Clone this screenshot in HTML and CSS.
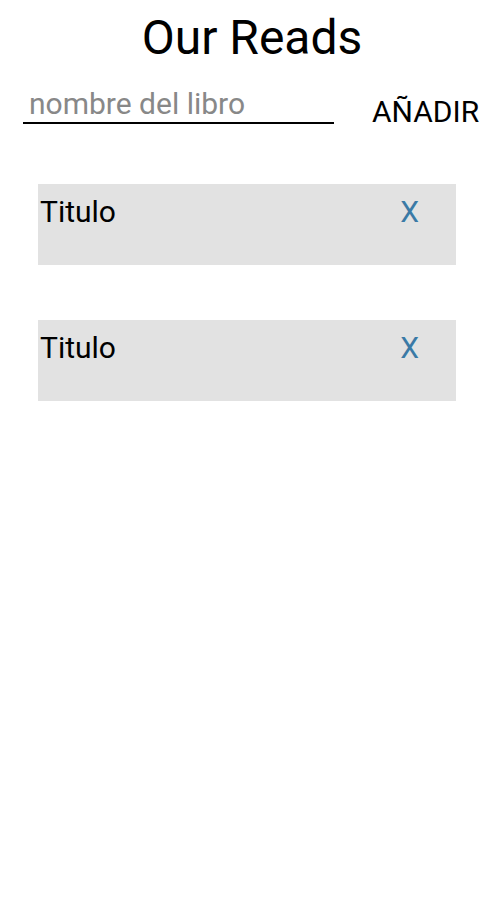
FILE: index.html
```html
<!DOCTYPE html>
<html>
<head>
<meta charset="utf-8">
<link rel="stylesheet" href="styles.css">
</head>
<body>
<div class="app">
  <h1 class="title">Our Reads</h1>
  <div class="form-row">
    <input class="book-input" type="text" placeholder="nombre del libro">
    <button class="add-btn">AÑADIR</button>
  </div>
  <div class="list">
    <div class="card">
      <span class="card-title">Titulo</span>
      <span class="card-remove">X</span>
    </div>
    <div class="card">
      <span class="card-title">Titulo</span>
      <span class="card-remove">X</span>
    </div>
  </div>
</div>
</body>
</html>
```
FILE: styles.css
```css
html, body {
  margin: 0;
  padding: 0;
  background: #ffffff;
  font-family: Roboto, "Noto Sans", sans-serif;
  color: #000;
}
.app {
  width: 504px;
}
.title {
  margin: 0;
  padding-top: 8px;
  text-align: center;
  font-size: 48px;
  font-weight: 400;
  line-height: 60px;
}
.form-row {
  display: flex;
  align-items: flex-start;
  padding: 16px 0 0 23px;
}
.book-input {
  width: 311px;
  height: 40px;
  box-sizing: border-box;
  border: none;
  border-bottom: 2px solid #000;
  outline: none;
  font-family: Roboto, sans-serif;
  font-size: 30px;
  padding: 0 0 0 6px;
  margin: 0;
  background: transparent;
  color: #000;
}
.book-input::placeholder {
  color: #888;
}
.add-btn {
  margin: 10px 0 0 38px;
  border: none;
  background: transparent;
  padding: 0;
  font-family: Roboto, sans-serif;
  font-size: 30px;
  line-height: 36px;
  color: #000;
}
.list {
  display: flex;
  flex-direction: column;
  gap: 55px;
  padding: 54px 0 0 38px;
}
.card {
  width: 418px;
  height: 81px;
  background: #e2e2e2;
  display: flex;
  justify-content: space-between;
  align-items: flex-start;
  padding: 10px 37px 0 2px;
  box-sizing: border-box;
  font-size: 30px;
  line-height: 36px;
}
.card-remove {
  color: #3a7aa6;
}
```
